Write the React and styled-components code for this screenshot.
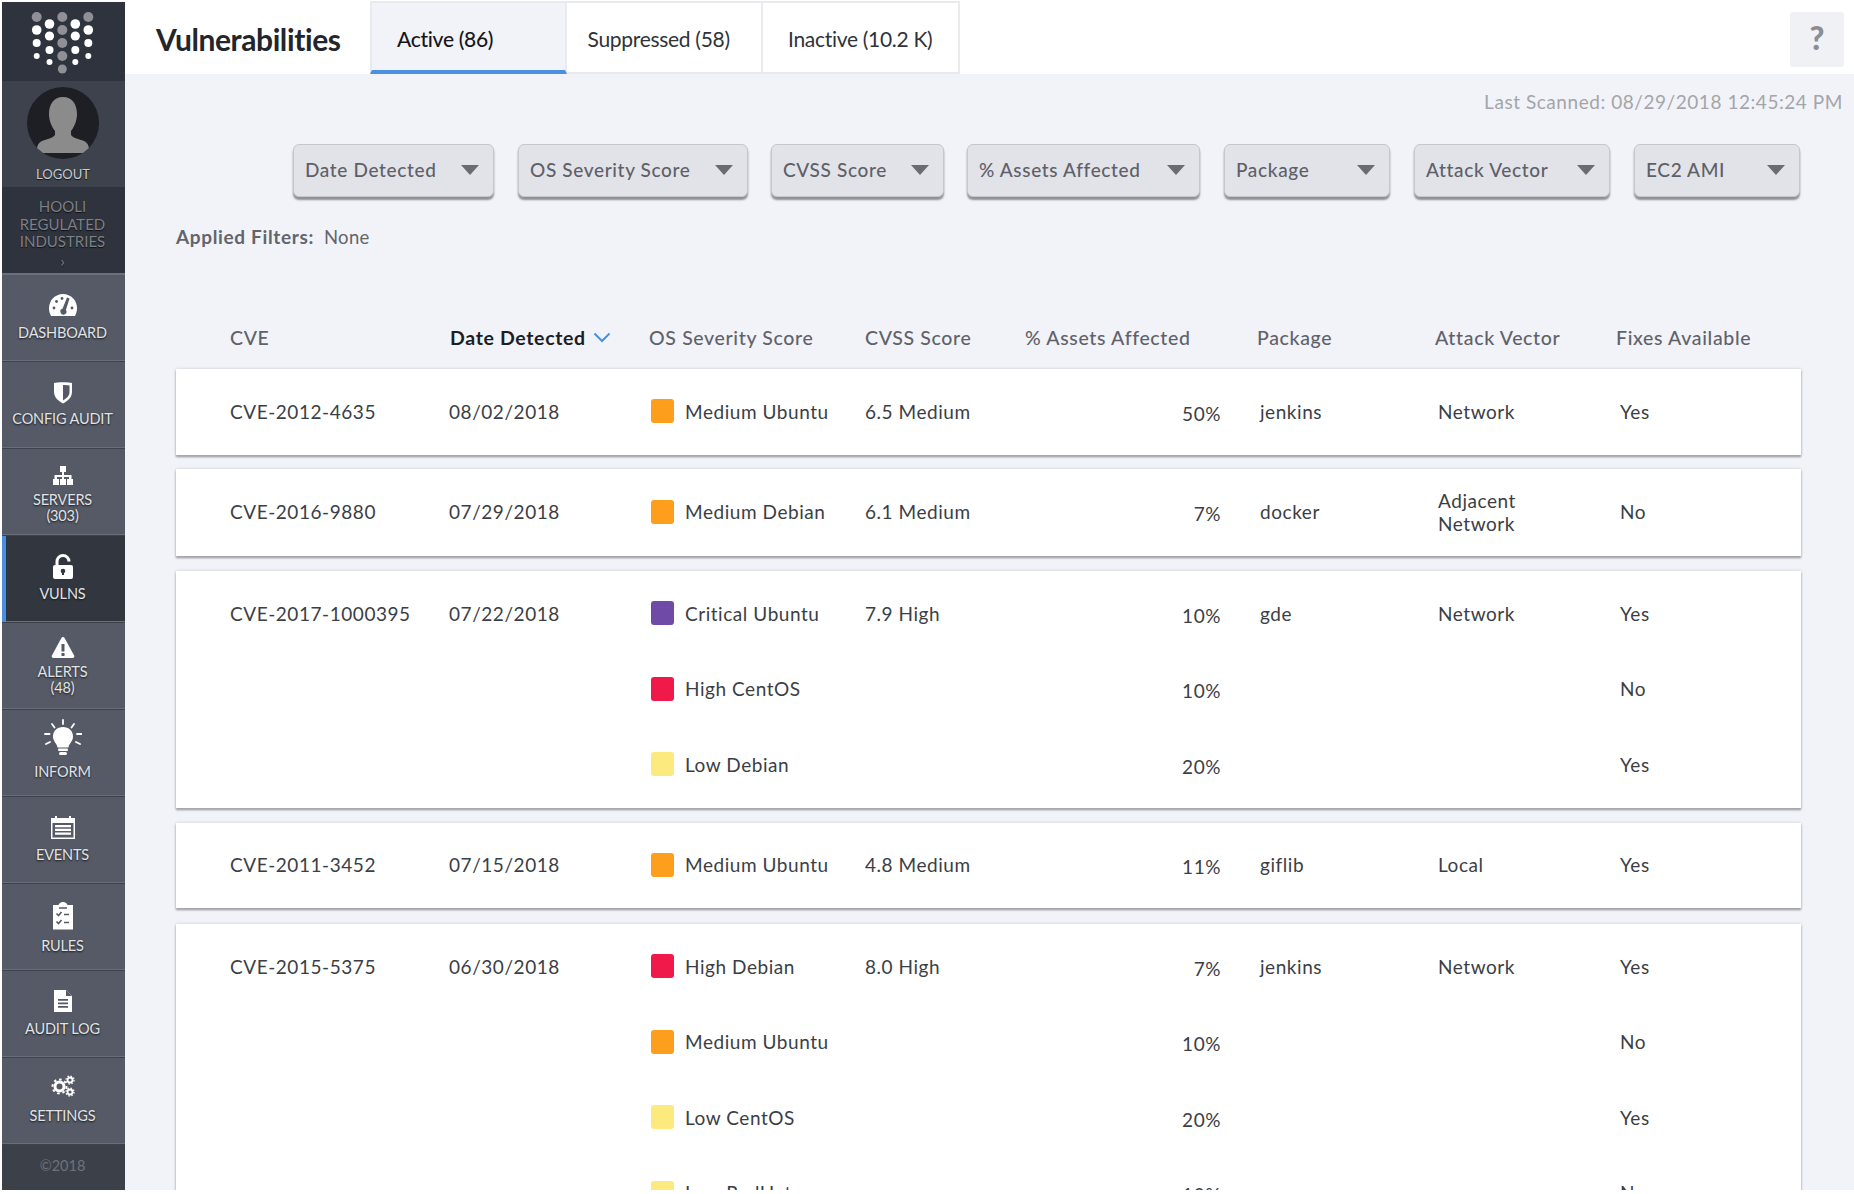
import React from "react";
import styled, { createGlobalStyle } from "styled-components";

const Global = createGlobalStyle`
  html, body { margin: 0; padding: 0; background: #fff; }
  body { font-family: Lato, "Open Sans", sans-serif; }
  * { box-sizing: border-box; }
`;

const Shell = styled.div`
  display: flex;
  width: 1854px;
  height: 1190px;
  padding-left: 2px;
  overflow: hidden;
  background: #fff;
`;
const Sidebar = styled.nav`
  flex: 0 0 123px;
  display: flex;
  flex-direction: column;
  background: #555a66;
  margin-top: 2px;
  height: 1188px;
`;
const LogoBox = styled.div`
  flex: 0 0 79px;
  background: #2f333e;
  display: flex;
  align-items: flex-start;
  justify-content: center;
`;
const Profile = styled.div`
  flex: 0 0 106px;
  background: #3d424d;
  display: flex;
  flex-direction: column;
  align-items: center;
  padding: 6px 1px 0 0;
  color: #c9cbd0;
  font-size: 13px;
  line-height: 16px;
  text-shadow: 0 1px 1px #111;
`;
const Avatar = styled.div`
  width: 72px;
  height: 72px;
  border-radius: 50%;
  background: #1d1f24;
  overflow: hidden;
  margin-bottom: 7px;
`;
const Org = styled.div`
  flex: 0 0 88px;
  background: #2f333e;
  color: #7d8087;
  font-size: 15px;
  line-height: 17.5px;
  text-align: center;
  padding: 11px 2px 0 0;
  border-bottom: 2px solid #6c707a;
  text-shadow: 0 1px 1px #111;
`;
const Chevron = styled.div`
  font-size: 16px;
  line-height: 20px;
`;
const NavItem = styled.div`
  flex: 0 0 87px;
  position: relative;
  display: flex;
  flex-direction: column;
  align-items: center;
  padding: ${(p) => p.$top}px 2px 0 0;
  background: ${(p) => (p.$active ? "#32363f" : "#555a66")};
  border-bottom: 1px solid #3e424c;
  box-shadow: inset 0 -1px 0 #6a6e78;
  color: #e2e3e6;
  font-size: 14.5px;
  line-height: 16px;
  letter-spacing: -0.15px;
  text-align: center;
  text-shadow: 0 1px 2px #15171b;
  &::before {
    content: "";
    display: ${(p) => (p.$active ? "block" : "none")};
    position: absolute;
    left: 0;
    top: 0;
    bottom: 0;
    width: 4px;
    background: #4a90e2;
  }
`;
const NavIcon = styled.div`
  height: 30px;
  display: flex;
  align-items: center;
  justify-content: center;
  margin-bottom: ${(p) => p.$gap}px;
`;
const Copyright = styled.div`
  flex: 1;
  background: #3c4049;
  color: #6f727a;
  font-size: 14.5px;
  text-align: center;
  padding: 12px 2px 0 0;
`;

const Main = styled.main`
  flex: 1;
  display: flex;
  flex-direction: column;
  min-width: 0;
`;
const TopBar = styled.header`
  flex: 0 0 74px;
  height: 74px;
  display: flex;
  background: #fff;
  position: relative;
`;
const Title = styled.h1`
  margin: 0;
  width: 245px;
  height: 74px;
  padding-left: 31px;
  font-size: 30px;
  font-weight: 700;
  line-height: 78px;
  color: #22252b;
  letter-spacing: -0.4px;
`;
const Tab = styled.div`
  width: 196.5px;
  height: 73px;
  margin-top: 1px;
  padding-left: ${(p) => p.$pad}px;
  line-height: 72px;
  font-size: 21px;
  letter-spacing: -0.3px;
  color: ${(p) => (p.$active ? "#15171c" : "#30333a")};
  font-weight: ${(p) => (p.$active ? 500 : 400)};
  background: ${(p) => (p.$active ? "#f2f3f8" : "#fff")};
  border: 2px solid #e9eaee;
  border-left-width: ${(p) => (p.$active ? 2 : 0)}px;
  border-bottom: ${(p) => (p.$active ? "4px solid #4a90e2" : "2px solid #e9eaee")};
`;
const Help = styled.div`
  margin-left: auto;
  margin-right: 10px;
  margin-top: 12px;
  width: 54px;
  height: 55px;
  border-radius: 3px;
  background: #f0f1f5;
  color: #8b8d93;
  font-size: 32px;
  font-weight: 900;
  line-height: 52px;
  text-align: center;
`;
const Content = styled.div`
  flex: 1;
  background: #f2f3f8;
  overflow: hidden;
  padding-left: 51px;
`;
const Scanned = styled.div`
  height: 28px;
  margin-top: 14px;
  padding-right: 11px;
  text-align: right;
  color: #a3a5aa;
  font-size: 19px;
  line-height: 28px;
  letter-spacing: 0.55px;
`;
const Filters = styled.div`
  display: flex;
  margin-top: 28px;
  margin-left: 117px;
`;
const Filter = styled.div`
  width: ${(p) => p.$w}px;
  margin-right: ${(p) => p.$mr}px;
  height: 53px;
  padding: 0 14px 2px 11px;
  display: flex;
  align-items: center;
  justify-content: space-between;
  background: #e2e3e8;
  border: 1px solid #c6c7cc;
  border-radius: 6px;
  box-shadow: 0 3px 2px #8e8f94;
  color: #5e6068;
  font-size: 19px;
  font-weight: 500;
  letter-spacing: 0.65px;
`;
const Caret = styled.span`
  width: 0;
  height: 0;
  border-left: 9.5px solid transparent;
  border-right: 9.5px solid transparent;
  border-top: 10px solid #6b6c72;
`;
const Applied = styled.div`
  margin-top: 26px;
  height: 28px;
  font-size: 18.5px;
  line-height: 28px;
  color: #62656c;
  letter-spacing: 0.3px;
  b { font-size: 19px; font-weight: 700; margin-right: 10px; letter-spacing: 0.65px; }
`;
const HeaderRow = styled.div`
  display: grid;
  grid-template-columns: 220px 199px 216px 160px 232px 178px 181px 1fr;
  margin-top: 70px;
  padding-left: 54px;
  height: 32px;
  align-items: center;
  color: #5f626b;
  font-size: 19.5px;
  font-weight: 500;
  letter-spacing: 0.65px;
`;
const SortHead = styled.div`
  color: #1c1e24;
  font-weight: 700;
  display: flex;
  align-items: center;
  gap: 7px;
  white-space: nowrap;
`;
const Card = styled.section`
  width: 1625px;
  background: #fff;
  margin-top: ${(p) => p.$mt}px;
  padding: ${(p) => p.$py ?? 5}px 0;
  box-shadow: 0 0 3px #c9cad0, 0 2px 2px #8c8d92;
`;
const Row = styled.div`
  display: grid;
  grid-template-columns: 219px 202px 214px 155px 201px 217px 182px 1fr;
  padding: 0 0 1px 54px;
  height: 75.5px;
  align-items: center;
  color: #3b3e45;
  font-size: 19px;
  line-height: 23px;
  letter-spacing: 0.55px;
`;
const Severity = styled.div`
  display: flex;
  align-items: center;
  gap: 11px;
  white-space: nowrap;
`;
const Chip = styled.span`
  width: 23px;
  height: 24px;
  border-radius: 3px;
  background: ${(p) => p.$c};
`;
const Pct = styled.div`
  text-align: right;
  padding-top: 4px;
`;
const Pkg = styled.div`
  padding-left: 39px;
`;
const Vector = styled.div`
  max-width: 110px;
`;

const Logo = () => {
  const big = [[15, 5], [28, 4.8], [41, 4], [54, 3]];
  const mid = [[22, 4.8], [34, 4.6], [48, 4], [60, 3]];
  const gray = [[15, 5], [28, 5], [41, 5], [54, 5], [67, 4.5]];
  return (
    <svg width="123" height="79" viewBox="2 0 123 79">
      {big.map(([y, r], i) => (
        <g key={i}>
          <circle cx="36.7" cy={y} r={r} fill={i ? "#fff" : "#8e9095"} />
          <circle cx="88.3" cy={y} r={r} fill={i ? "#fff" : "#8e9095"} />
        </g>
      ))}
      {mid.map(([y, r], i) => (
        <g key={i}>
          <circle cx="49.5" cy={y} r={r} fill="#fff" />
          <circle cx="75.3" cy={y} r={r} fill="#fff" />
        </g>
      ))}
      {gray.map(([y, r], i) => (
        <circle key={i} cx="62.3" cy={y} r={r} fill="#8e9095" />
      ))}
    </svg>
  );
};

const Person = () => (
  <svg width="72" height="72" viewBox="0 0 72 72">
    <path
      fill="#8b8b8b"
      d="M36 10c9 0 14 7 14 17 0 7-3 13-6 17v4c2 3 8 4 13 6 4 2 5 5 5 9v3H10v-3c0-4 1-7 5-9 5-2 11-3 13-6v-4c-3-4-6-10-6-17 0-10 5-17 14-17z"
    />
  </svg>
);

const icons = {
  dashboard: (
    <svg width="30" height="24" viewBox="0 0 30 24">
      <path fill="#fff" d="M15 1C7 1 1 7.500 1 15c0 3 .7 5.500 2 8h24c1.300-2.500 2-5 2-8 0-7.500-6-14-14-14z" />
      <g fill="#555a66">
        <circle cx="6" cy="15" r="1.400" />
        <circle cx="8.500" cy="8.500" r="1.400" />
        <circle cx="14" cy="5.500" r="1.400" />
        <circle cx="24" cy="15" r="1.400" />
        <path d="M19 4.500l2.500 1-3.600 11.500a3 3 0 1 1-3.400-1.200z" />
      </g>
    </svg>
  ),
  shield: (
    <svg width="20" height="23" viewBox="0 0 20 23">
      <path fill="#fff" d="M1 2c3-1 15-1 18 0v9c0 5-4 9-9 11.500C5 20 1 16 1 11z" />
      <path fill="#555a66" d="M10 4c2.500 0 5 .2 6.500.5V11c0 3.500-2.500 6-6.500 8.500z" />
    </svg>
  ),
  servers: (
    <svg width="24" height="22" viewBox="0 0 24 22">
      <path fill="#fff" d="M9 1h6v6h-2v3h7.500v4H22v6h-6v-6h2v-2h-5v2h2v6H9v-6h2v-2H6v2h2v6H2v-6h1.500v-4H11V7H9z" />
    </svg>
  ),
  unlock: (
    <svg width="22" height="26" viewBox="0 0 22 26">
      <path fill="none" stroke="#fff" strokeWidth="3" d="M5 12V7.500a6 6 0 0 1 12 0" />
      <rect x="1" y="11" width="20" height="14" rx="2" fill="#fff" />
      <circle cx="11" cy="17" r="2.300" fill="#32363f" />
      <rect x="10" y="17" width="2" height="4" fill="#32363f" />
    </svg>
  ),
  alert: (
    <svg width="24" height="22" viewBox="0 0 24 22">
      <path fill="#fff" d="M12 1c.7 0 1.200.4 1.600 1.100l9.500 17.500c.5 1 0 2.400-1.400 2.400H2.300C.9 22 .4 20.600.9 19.600L10.400 2.100C10.800 1.400 11.300 1 12 1z" />
      <rect x="10.500" y="8" width="3" height="7.500" fill="#555a66" />
      <rect x="10.500" y="17" width="3" height="3" fill="#555a66" />
    </svg>
  ),
  bulb: (
    <svg width="38" height="38" viewBox="0 0 38 38">
      <g stroke="#fff" strokeWidth="1.800" strokeLinecap="round">
        <path d="M19 1v4M8 5l2.500 3.500M30 5l-2.500 3.500M1 15h4.500M33 15h4.500M2 25l4-2M36 25l-4-2" />
      </g>
      <path fill="#fff" d="M19 8c-6 0-10 4-10 9.500 0 5 4 7 4.500 11h11C25 24.500 29 22.500 29 17.500 29 12 25 8 19 8z" />
      <rect x="14" y="29.500" width="10" height="2.500" rx="1" fill="#fff" />
      <rect x="15" y="33" width="8" height="3" rx="1.500" fill="#fff" />
    </svg>
  ),
  calendar: (
    <svg width="26" height="24" viewBox="0 0 26 24">
      <path fill="#fff" d="M1 3h4V1h2v2h12V1h2v2h4v21H1z" />
      <rect x="2.500" y="8" width="21" height="14.500" fill="#555a66" />
      <path fill="#fff" d="M5 10h16v2.200H5zM5 13.800h16V16H5zM5 17.600h16v2.200H5z" />
    </svg>
  ),
  rules: (
    <svg width="22" height="28" viewBox="0 0 22 28">
      <path fill="#fff" d="M1 3h5.500C7 1.500 8.500 0 11 0s4 1.500 4.500 3H21v24.500H1z" />
      <path fill="none" stroke="#555a66" strokeWidth="1.600" d="M4.500 11.500l2 2 3-3.500M4.500 19.500l2 2 3-3.500M12 12.500h5M12 20.500h5M7 6h8" />
    </svg>
  ),
  file: (
    <svg width="20" height="24" viewBox="0 0 20 24">
      <path fill="#fff" d="M1 1h12l6 6v16H1z" />
      <path fill="#555a66" d="M13 1l6 6h-6zM5 10h10v1.800H5zM5 13.500h10v1.800H5zM5 17h10v1.800H5z" />
    </svg>
  ),
  gears: (
    <svg width="24" height="22" viewBox="0 0 24 22">
      <g fill="none" stroke="#fff">
        <circle cx="8.500" cy="11.500" r="4.500" strokeWidth="3" />
        <circle cx="8.500" cy="11.500" r="7" strokeWidth="2" strokeDasharray="2.500 2.900" />
        <circle cx="19" cy="5" r="2.500" strokeWidth="1.800" />
        <circle cx="19" cy="5" r="4" strokeWidth="1.300" strokeDasharray="1.500 1.650" />
        <circle cx="19" cy="17" r="2.500" strokeWidth="1.800" />
        <circle cx="19" cy="17" r="4" strokeWidth="1.300" strokeDasharray="1.500 1.650" />
      </g>
    </svg>
  ),
};

const nav = [
  { i: "dashboard", l: ["DASHBOARD"], top: 15, gap: 5 },
  { i: "shield", l: ["CONFIG AUDIT"], top: 15, gap: 4 },
  { i: "servers", l: ["SERVERS", "(303)"], top: 12, gap: 1 },
  { i: "unlock", l: ["VULNS"], top: 16, gap: 4, active: true },
  { i: "alert", l: ["ALERTS", "(48)"], top: 9, gap: 2 },
  { i: "bulb", l: ["INFORM"], top: 13, gap: 11 },
  { i: "calendar", l: ["EVENTS"], top: 15, gap: 5 },
  { i: "rules", l: ["RULES"], top: 17, gap: 7 },
  { i: "file", l: ["AUDIT LOG"], top: 15, gap: 5 },
  { i: "gears", l: ["SETTINGS"], top: 13, gap: 7 },
];

const filters = [
  ["Date Detected", 201, 24],
  ["OS Severity Score", 230, 23],
  ["CVSS Score", 173, 23],
  ["% Assets Affected", 233, 24],
  ["Package", 166, 24],
  ["Attack Vector", 196, 24],
  ["EC2 AMI", 166, 0],
];

const C = { med: "#fd9e1c", crit: "#6f4aa6", high: "#ef1a4a", low: "#fdea7e" };

const cards = [
  { mt: 16, cve: "CVE-2012-4635", date: "08/02/2018", cvss: "6.5 Medium", pkg: "jenkins", vec: "Network",
    sev: [[C.med, "Medium Ubuntu", "50%", "Yes"]] },
  { mt: 14, py: 6, cve: "CVE-2016-9880", date: "07/29/2018", cvss: "6.1 Medium", pkg: "docker", vec: "Adjacent Network",
    sev: [[C.med, "Medium Debian", "7%", "No"]] },
  { mt: 15, cve: "CVE-2017-1000395", date: "07/22/2018", cvss: "7.9 High", pkg: "gde", vec: "Network",
    sev: [[C.crit, "Critical Ubuntu", "10%", "Yes"], [C.high, "High CentOS", "10%", "No"], [C.low, "Low Debian", "20%", "Yes"]] },
  { mt: 15, cve: "CVE-2011-3452", date: "07/15/2018", cvss: "4.8 Medium", pkg: "giflib", vec: "Local",
    sev: [[C.med, "Medium Ubuntu", "11%", "Yes"]] },
  { mt: 16, cve: "CVE-2015-5375", date: "06/30/2018", cvss: "8.0 High", pkg: "jenkins", vec: "Network",
    sev: [[C.high, "High Debian", "7%", "Yes"], [C.med, "Medium Ubuntu", "10%", "No"], [C.low, "Low CentOS", "20%", "Yes"], [C.low, "Low RedHat", "10%", "No"]] },
];

export default function App() {
  return (
    <>
      <Global />
      <Shell>
        <Sidebar>
          <LogoBox><Logo /></LogoBox>
          <Profile>
            <Avatar><Person /></Avatar>
            LOGOUT
          </Profile>
          <Org>
            HOOLI<br />REGULATED<br />INDUSTRIES
            <Chevron>›</Chevron>
          </Org>
          {nav.map((n) => (
            <NavItem key={n.i} $top={n.top} $active={n.active}>
              <NavIcon $gap={n.gap}>{icons[n.i]}</NavIcon>
              {n.l.map((t) => <div key={t}>{t}</div>)}
            </NavItem>
          ))}
          <Copyright>©2018</Copyright>
        </Sidebar>
        <Main>
          <TopBar>
            <Title>Vulnerabilities</Title>
            <Tab $active $pad={25}>Active (86)</Tab>
            <Tab $pad={21}>Suppressed (58)</Tab>
            <Tab $pad={25}>Inactive (10.2 K)</Tab>
            <Help>?</Help>
          </TopBar>
          <Content>
            <Scanned>Last Scanned: 08/29/2018 12:45:24 PM</Scanned>
            <Filters>
              {filters.map(([t, w, mr]) => (
                <Filter key={t} $w={w} $mr={mr}>{t}<Caret /></Filter>
              ))}
            </Filters>
            <Applied><b>Applied Filters:</b>None</Applied>
            <HeaderRow>
              <div>CVE</div>
              <SortHead>
                Date Detected
                <svg width="18" height="11" viewBox="0 0 18 11">
                  <path d="M1.500 1.500L9 9l7.500-7.500" fill="none" stroke="#4a90e2" strokeWidth="2" />
                </svg>
              </SortHead>
              <div>OS Severity Score</div>
              <div>CVSS Score</div>
              <div>% Assets Affected</div>
              <div>Package</div>
              <div>Attack Vector</div>
              <div>Fixes Available</div>
            </HeaderRow>
            {cards.map((c) => (
              <Card key={c.cve} $mt={c.mt} $py={c.py}>
                {c.sev.map(([col, name, pct, fix], i) => (
                  <Row key={name + i}>
                    <div>{i === 0 ? c.cve : ""}</div>
                    <div>{i === 0 ? c.date : ""}</div>
                    <Severity><Chip $c={col} />{name}</Severity>
                    <div>{i === 0 ? c.cvss : ""}</div>
                    <Pct>{pct}</Pct>
                    <Pkg>{i === 0 ? c.pkg : ""}</Pkg>
                    <Vector>{i === 0 ? c.vec : ""}</Vector>
                    <div>{fix}</div>
                  </Row>
                ))}
              </Card>
            ))}
          </Content>
        </Main>
      </Shell>
    </>
  );
}
